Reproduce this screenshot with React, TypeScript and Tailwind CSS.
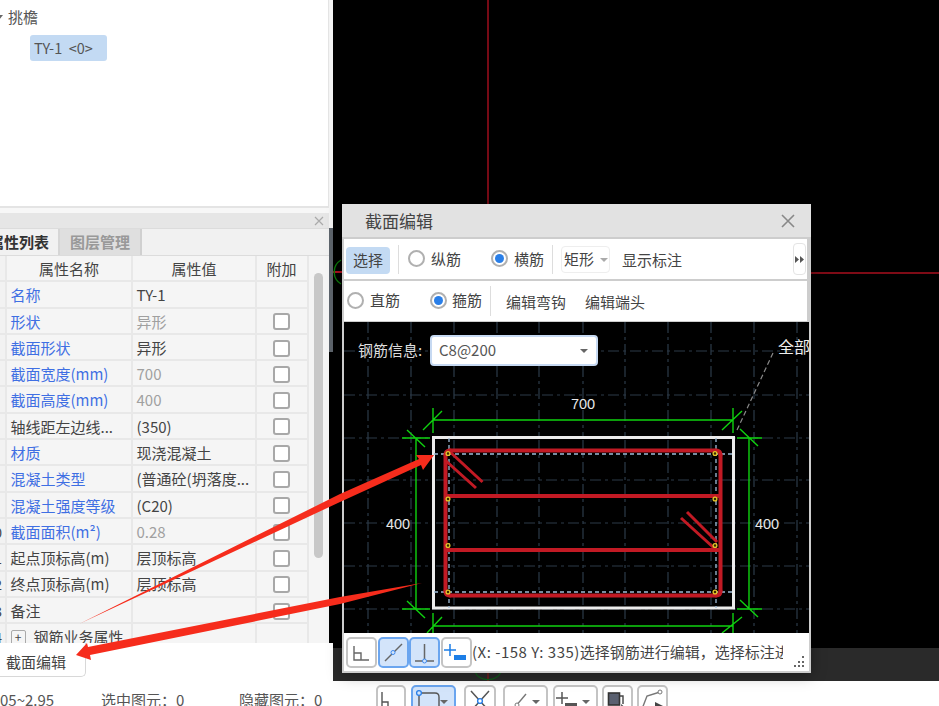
import React from "react";

const FONT = "font-['Noto_Sans_CJK_SC','Liberation_Sans',sans-serif]";

type Row = { n?: string; name: string; link?: boolean; value?: string; gray?: boolean; cb?: boolean; plus?: boolean };
const rows: Row[] = [
  { name: "名称", link: true, value: "TY-1" },
  { name: "形状", link: true, value: "异形", gray: true, cb: true },
  { name: "截面形状", link: true, value: "异形", cb: true },
  { name: "截面宽度(mm)", link: true, value: "700", gray: true, cb: true },
  { name: "截面高度(mm)", link: true, value: "400", gray: true, cb: true },
  { name: "轴线距左边线...", value: "(350)", cb: true },
  { name: "材质", link: true, value: "现浇混凝土", cb: true },
  { name: "混凝土类型", link: true, value: "(普通砼(坍落度...", cb: true },
  { name: "混凝土强度等级", link: true, value: "(C20)", cb: true },
  { n: "10", name: "截面面积(m²)", link: true, value: "0.28", gray: true, cb: true },
  { n: "11", name: "起点顶标高(m)", value: "层顶标高", cb: true },
  { n: "12", name: "终点顶标高(m)", value: "层顶标高", cb: true },
  { n: "13", name: "备注", value: "", cb: true },
  { n: "14", name: "钢筋业务属性", plus: true },
];

function PropTable() {
  const cell = "h-[26.3px] border-b-2 border-r-2 border-[#e8e8e8] flex items-center overflow-hidden whitespace-nowrap shrink-0 pt-[2px]";
  return (
    <div className="w-[309px] h-[387px] overflow-hidden shrink-0 grid grid-cols-[7px_126px_124px_52px] content-start text-[15px] text-[#444]">
      <div className={`${cell} bg-[#f2f2f2]`} />
      <div className={`${cell} justify-center`}>属性名称</div>
      <div className={`${cell} justify-center`}>属性值</div>
      <div className={`${cell} justify-center pr-[1px]`}>附加</div>
      {rows.map((r) => (
        <React.Fragment key={r.name}>
          <div className={`${cell} bg-[#f2f2f2] justify-end pr-[3px] text-[14px]`}>
            {r.n ? <span className="shrink-0">{r.n}</span> : null}
          </div>
          <div className={`${cell} pl-[3.5px] ${r.link ? "text-[#3f6fe3]" : ""}`}>
            {r.plus ? (
              <span className="w-[15px] h-[15px] border border-[#aaa] rounded-[2px] mr-[8px] flex items-center justify-center text-[12px] leading-none">+</span>
            ) : null}
            {r.name}
          </div>
          <div className={`${cell} pl-[3.5px] ${r.gray ? "text-[#a0a0a0]" : ""}`}>{r.value}</div>
          <div className={`${cell} justify-center pr-[1px]`}>
            {r.cb ? <span className="w-[17px] h-[17px] border-2 border-[#a8a8a8] rounded-[3px] bg-white" /> : null}
          </div>
        </React.Fragment>
      ))}
    </div>
  );
}

function Radio({ on }: { on?: boolean }) {
  return (
    <span className="w-[17px] h-[17px] rounded-full border-2 border-[#b0b0b0] bg-white flex items-center justify-center shrink-0 mb-[2px]">
      {on ? <span className="w-[9px] h-[9px] rounded-full bg-[#2a7fe8]" /> : null}
    </span>
  );
}

function Tri({ className = "" }: { className?: string }) {
  return <span className={`w-0 h-0 border-l-[4px] border-r-[4px] border-t-[4px] border-l-transparent border-r-transparent border-t-[#666] ${className}`} />;
}

function IconBtn({ w, on, children, arrow }: { w: number; on?: boolean; children: React.ReactNode; arrow?: boolean }) {
  return (
    <div
      style={{ width: w }}
      className={`h-[31px] relative rounded-[5px] border-2 shrink-0 ${on ? "bg-[#d3e4fa] border-[#6aa5ef]" : "bg-white border-[#c4c4c4]"}`}
    >
      <svg width={w - 4} height="27" viewBox={`2 2 ${w - 4} 27`} className="block">
        {children}
      </svg>
      {arrow ? <Tri className="absolute right-[6px] top-[13px]" /> : null}
    </div>
  );
}

function SectionDrawing() {
  const vs = [368, 411, 454, 497, 539, 583, 625, 668, 711, 754, 797];
  const hs = [352, 396, 439, 481, 524, 567, 610];
  const G = "#0fd20f";
  const R = "#c21a24";
  return (
    <svg className="absolute inset-0 block" width="465" height="311" viewBox="344 323 465 311">
      <g stroke="#2c3b49" strokeWidth="1.2" strokeDasharray="11 4 3 4" fill="none">
        {vs.map((x) => <line key={x} x1={x} y1="323" x2={x} y2="634" />)}
        {hs.map((y) => <line key={y} x1="344" y1={y} x2="809" y2={y} />)}
      </g>
      <polyline points="737,431 773,354" stroke="#8a8a8a" strokeWidth="1.2" strokeDasharray="5 3" fill="none" />
      <g stroke={G} strokeWidth="1.4" fill="none">
        <path d="M433 421H733M433 409V434M733 409V434M423 431L442 412M722 431L742 412" />
        <path d="M416 439V610M402 439H430M402 610H430M407 431L425 448M407 602L425 619" />
        <path d="M749 439V610M737 439H762M737 610H762M740 430L758 447M740 601L758 618" />
        <path d="M433 627H733M433 614V634M733 614V634M427 634L442 618M722 634L742 618" />
      </g>
      <rect x="433.5" y="438.5" width="300" height="170.5" fill="#000" stroke="#ececec" strokeWidth="3" />
      <g stroke="#2c3b49" strokeWidth="1.2" strokeDasharray="11 4 3 4" fill="none">
        {vs.slice(2, 9).map((x) => <line key={x} x1={x} y1="441" x2={x} y2="607" />)}
        {hs.slice(3, 6).map((y) => <line key={y} x1="436" y1={y} x2="732" y2={y} />)}
      </g>
      <g stroke="#9fbcd8" strokeWidth="1.3" strokeDasharray="4 3" fill="none">
        <line x1="434" y1="455" x2="733" y2="455" />
        <line x1="434" y1="593" x2="733" y2="593" />
        <line x1="449" y1="439" x2="449" y2="609" />
        <line x1="716" y1="439" x2="716" y2="609" />
      </g>
      <g stroke={R} fill="none" strokeWidth="4" strokeLinecap="round">
        <line x1="450" y1="451.5" x2="716" y2="451.5" />
        <line x1="720.5" y1="456" x2="720.5" y2="592" />
        <line x1="450" y1="596.5" x2="716" y2="596.5" />
        <line x1="445.5" y1="456" x2="445.5" y2="592" />
        <path d="M445.5 456Q445.5 451.5 450 451.5M716 451.5Q720.5 451.5 720.5 456M720.5 592Q720.5 596.5 716 596.5M450 596.5Q445.5 596.5 445.5 592" />
        <path d="M446 497H720M446 551H720" />
        <path d="M448 451L482.5 483M446 462L476 489" strokeWidth="3" strokeLinecap="butt" />
        <path d="M717 543L687 513M714 549L681 519" strokeWidth="3" strokeLinecap="butt" />
      </g>
      <g fill="#3a2a00" stroke="#e6c62a" strokeWidth="1.3">
        {[448, 715].flatMap((x) =>
          [454.5, 500, 546.5, 593].map((y) => <circle key={`${x}-${y}`} cx={x} cy={y} r="1.9" />)
        )}
      </g>
      <g fill="#e8e8e8" fontSize="14.5" fontFamily="'Liberation Sans', sans-serif" textAnchor="middle">
        <text x="583" y="410">700</text>
        <text x="398" y="530">400</text>
        <text x="767" y="530">400</text>
      </g>
    </svg>
  );
}

function Dialog() {
  return (
    <div className="absolute left-[342px] top-[204px] w-[469px] h-[469px] bg-[#cdcdcd] flex flex-col shadow-[0_2px_14px_rgba(0,0,0,0.35)] text-[15px] text-[#444]">
      <div className="h-[33px] bg-[#e2e2e2] flex items-center pl-[23px] pr-[15px] justify-between shrink-0">
        <span className="text-[17px] leading-none">截面编辑</span>
        <svg width="16" height="16" viewBox="0 0 16 16">
          <path d="M2 2L14 14M14 2L2 14" stroke="#888" strokeWidth="1.6" />
        </svg>
      </div>
      <div className="h-[40px] mt-[2px] mx-[2px] w-[463px] bg-white flex items-center shrink-0 relative">
        <span className="ml-[2px] w-[44px] h-[27px] rounded-[4px] bg-[#c3daf3] flex items-center justify-center mt-[2px]">选择</span>
        <span className="ml-[8px] w-[1px] h-[29px] bg-[#ddd]" />
        <span className="ml-[9px]"><Radio /></span>
        <span className="ml-[6px]">纵筋</span>
        <span className="ml-[30px]"><Radio on /></span>
        <span className="ml-[6px]">横筋</span>
        <span className="ml-[8px] w-[1px] h-[29px] bg-[#ddd]" />
        <span className="ml-[8px] w-[49px] h-[27px] rounded-[4px] border border-[#eee] flex items-center pl-[2px] mt-[1px]">
          矩形<Tri className="ml-[6px] !border-t-[#aaa]" />
        </span>
        <span className="ml-[12px] mt-[3px]">显示标注</span>
        <span className="absolute left-[449px] top-[4px] w-[13px] h-[32px] rounded-[4px] border border-[#e4e4e4] flex items-center justify-center">
          <svg width="9" height="7" viewBox="0 0 9 7" fill="#555">
            <path d="M0 0L4 3.5L0 7ZM5 0L9 3.5L5 7Z" />
          </svg>
        </span>
      </div>
      <div className="h-[40px] mt-[2px] mx-[2px] w-[463px] bg-white flex items-center shrink-0">
        <span className="ml-[3px]"><Radio /></span>
        <span className="ml-[6px] mb-[1px]">直筋</span>
        <span className="ml-[30px]"><Radio on /></span>
        <span className="ml-[5px] mb-[1px]">箍筋</span>
        <span className="ml-[8px] w-[1px] h-[30px] bg-[#ddd]" />
        <span className="ml-[15px] mt-[3px]">编辑弯钩</span>
        <span className="ml-[19px] mt-[3px]">编辑端头</span>
      </div>
      <div className="h-[311px] mt-[1px] mx-[2px] w-[465px] bg-black relative overflow-hidden shrink-0">
        <SectionDrawing />
        <div className="relative flex items-center pt-[13px] pl-[14px]">
          <span className="text-[#ddd] w-[72px]">钢筋信息:</span>
          <div className="w-[168px] h-[31px] bg-white rounded-[4px] border-2 border-[#c6d9f2] flex items-center pl-[7px] pr-[8px] justify-between text-[#555]">
            C8@200
            <Tri />
          </div>
        </div>
        <span className="absolute left-[434px] top-[16px] text-[16px] leading-none text-[#eee] whitespace-nowrap">全部</span>
      </div>
      <div className="flex-1 bg-white mx-[2px] mb-[2px] flex items-center pl-[2px] gap-[0.5px] relative overflow-hidden">
        <IconBtn w={31}>
          <path d="M8 9V23H23M8 16H15V23" fill="none" stroke="#666" strokeWidth="1.4" />
        </IconBtn>
        <IconBtn w={31} on>
          <path d="M7 24L24 7" stroke="#666" strokeWidth="1.5" />
          <circle cx="15" cy="15.5" r="2" fill="#d3e4fa" stroke="#3d8af0" />
        </IconBtn>
        <IconBtn w={31} on>
          <path d="M15.5 7V24M6 24H25" stroke="#666" strokeWidth="1.5" />
          <circle cx="15.5" cy="24" r="2" fill="#d3e4fa" stroke="#3d8af0" />
        </IconBtn>
        <IconBtn w={31}>
          <path d="M9 7V19M3 13H15" stroke="#1d7ee6" strokeWidth="1.5" />
          <rect x="13" y="18" width="12" height="5" fill="#1d7ee6" />
        </IconBtn>
        <span className="w-[311px] overflow-hidden whitespace-nowrap text-[15px]">
          <span className="tracking-[0.5px]">(X: -158 Y: 335)</span>选择钢筋进行编辑，选择标注进行编辑
        </span>
        <svg className="absolute right-[4px] bottom-[3px]" width="11" height="12" viewBox="0 0 11 12" fill="#666">
          <rect x="8" y="0" width="2" height="2" />
          <rect x="4" y="5" width="2" height="2" />
          <rect x="8" y="5" width="2" height="2" />
          <rect x="0" y="9" width="2" height="2" />
          <rect x="4" y="9" width="2" height="2" />
          <rect x="8" y="9" width="2" height="2" />
        </svg>
      </div>
    </div>
  );
}

export default function App() {
  return (
    <div className={`relative w-[939px] h-[706px] overflow-hidden bg-white flex flex-col ${FONT}`}>
      <div className="h-[681px] flex shrink-0">
        {/* left column */}
        <div className="w-[329px] h-full flex flex-col bg-white shrink-0">
          <div className="h-[208px] border-r border-b-2 border-[#e4e4e4] bg-white text-[#555] text-[15px] shrink-0">
            <div className="h-[35px] flex items-center">
              <Tri className="-ml-[5px] mr-[5px] border-t-[5px]" />
              <span>挑檐</span>
            </div>
            <div className="ml-[30px] w-[77px] h-[26px] rounded-[3px] bg-[#c3daf3] flex items-center pl-[4px] text-[14.5px] whitespace-pre">TY-1  &lt;0&gt;</div>
          </div>
          <div className="h-[5px] bg-[#f7f7f7] shrink-0" />
          <div className="h-[15px] bg-[#e6e6e6] flex items-center justify-end pr-[5px] shrink-0">
            <svg width="10" height="10" viewBox="0 0 10 10">
              <path d="M1 1L9 9M9 1L1 9" stroke="#aaa" strokeWidth="1.2" />
            </svg>
          </div>
          <div className="h-[28px] bg-[#f1f1f1] border-t border-b border-[#dcdcdc] flex shrink-0 text-[15px]">
            <span className="w-[60px] flex items-center justify-end overflow-hidden whitespace-nowrap text-[#333] font-bold border-r-2 border-[#d6d6d6] pr-[9px]">属性列表</span>
            <span className="w-[82px] flex items-center justify-center text-[#999] font-bold bg-[#dfdfdf] border-r-2 border-[#d0d0d0]">图层管理</span>
          </div>
          <div className="h-[387px] flex bg-[#f5f5f5] shrink-0">
            <PropTable />
            <div className="flex-1 pt-[17px] pl-[5px]">
              <div className="w-[9px] h-[285px] rounded-[5px] bg-[#c8c8c8]" />
            </div>
          </div>
          <div className="flex-1 pb-[4px]">
            <div className="w-[86px] h-[34px] bg-white border-r border-b border-[#d8d8d8] rounded-br-[5px] flex items-center pl-[6px] pt-[6px] text-[15px] text-[#444]">截面编辑</div>
          </div>
        </div>
        {/* scroll rail beside the canvas */}
        <div className="w-[4px] h-full flex flex-col shrink-0">
          <div className="h-[228px] bg-[#f4f4f4]" />
          <div className="h-[124px] bg-[#5e656d]" />
          <div className="h-[291px] bg-black" />
          <div className="flex-1 bg-white" />
        </div>
        {/* right canvas */}
        <div className="flex-1 h-full flex flex-col relative">
          <div className="h-[648px] bg-black shrink-0" />
          <div className="flex-1 bg-[#2a2a2a]" />
          <svg className="absolute inset-0" width="606" height="681" viewBox="333 0 606 681" fill="none">
            <path d="M488 0V210M800 273H939" stroke="#a80f1e" strokeWidth="1.4" />
            <path d="M333 272H342" stroke="#b01020" strokeWidth="2" />
            <path d="M341 260A14 14 0 0 0 341 284" stroke="#0a7a0a" strokeWidth="1.4" />
            <path d="M488 665V681" stroke="#8a1a1a" strokeWidth="1.2" />
            <path d="M475 672A14 12 0 0 0 501 672" stroke="#0f5c1a" strokeWidth="1.2" />
          </svg>
        </div>
      </div>
      {/* status bar and bottom toolbar */}
      <div className="flex-1 flex overflow-hidden text-[15px] text-[#555] bg-white">
        <div className="w-[376px] shrink-0 flex pt-[8px] whitespace-nowrap">
          <span className="w-[101px]">05~2.95</span>
          <span className="w-[138px]">选中图元：0</span>
          <span>隐藏图元：0</span>
        </div>
        <div className="flex pt-[4px] items-start">
          <IconBtn w={30}>
            <path d="M6 7V30M6 17H12V30" fill="none" stroke="#555" strokeWidth="1.4" />
          </IconBtn>
          <div className="ml-[5px]">
            <IconBtn w={45} on arrow>
              <path d="M8 8H24Q28 8 28 12V28M8 8V28" fill="none" stroke="#555" strokeWidth="1.4" />
              <circle cx="8" cy="8" r="2.4" fill="#d3e4fa" stroke="#2a7fe8" strokeWidth="1.3" />
            </IconBtn>
          </div>
          <div className="ml-[8px]">
            <IconBtn w={32}>
              <path d="M7 6L25 26M25 6L7 26" stroke="#555" strokeWidth="1.5" />
              <circle cx="16" cy="16" r="2.4" fill="#fff" stroke="#2a7fe8" strokeWidth="1.4" />
            </IconBtn>
          </div>
          <div className="ml-[7px]">
            <IconBtn w={45} arrow>
              <path d="M7 28L23 9" stroke="#777" strokeWidth="1.4" />
              <circle cx="14" cy="20" r="2" fill="#fff" stroke="#777" />
            </IconBtn>
          </div>
          <div className="ml-[5px]">
            <IconBtn w={45} arrow>
              <path d="M9 7V19M3 13H15" stroke="#555" strokeWidth="1.5" />
              <rect x="12" y="18" width="12" height="8" fill="#555" />
            </IconBtn>
          </div>
          <div className="ml-[4px]">
            <IconBtn w={31}>
              <rect x="6.5" y="8" width="11" height="12" fill="#5a6070" stroke="#333" strokeWidth="1.6" />
              <path d="M18 11H21V19" stroke="#444" strokeWidth="1.4" fill="none" />
              <path d="M19 19L26 25L21 25L20 28Z" fill="#444" />
            </IconBtn>
          </div>
          <div className="ml-[4px]">
            <IconBtn w={31}>
              <path d="M5 24L10 11L23 7" fill="none" stroke="#777" strokeWidth="1.4" />
              <circle cx="23" cy="7" r="2" fill="#fff" stroke="#777" />
              <path d="M18 17L26 21L18 26Z" fill="#444" />
            </IconBtn>
          </div>
        </div>
      </div>
      <Dialog />
      {/* annotation arrows */}
      <svg className="absolute inset-0 pointer-events-none" width="939" height="706" viewBox="0 0 939 706">
        <polygon points="79,624 340,494 419,459 416,455 434,455 423,470 421,465 340,502" fill="#f62c1c" />
        <polygon points="422,583 340,597 88,647 87,643 76,655 91,660 90,655 340,604" fill="#f62c1c" />
      </svg>
    </div>
  );
}
